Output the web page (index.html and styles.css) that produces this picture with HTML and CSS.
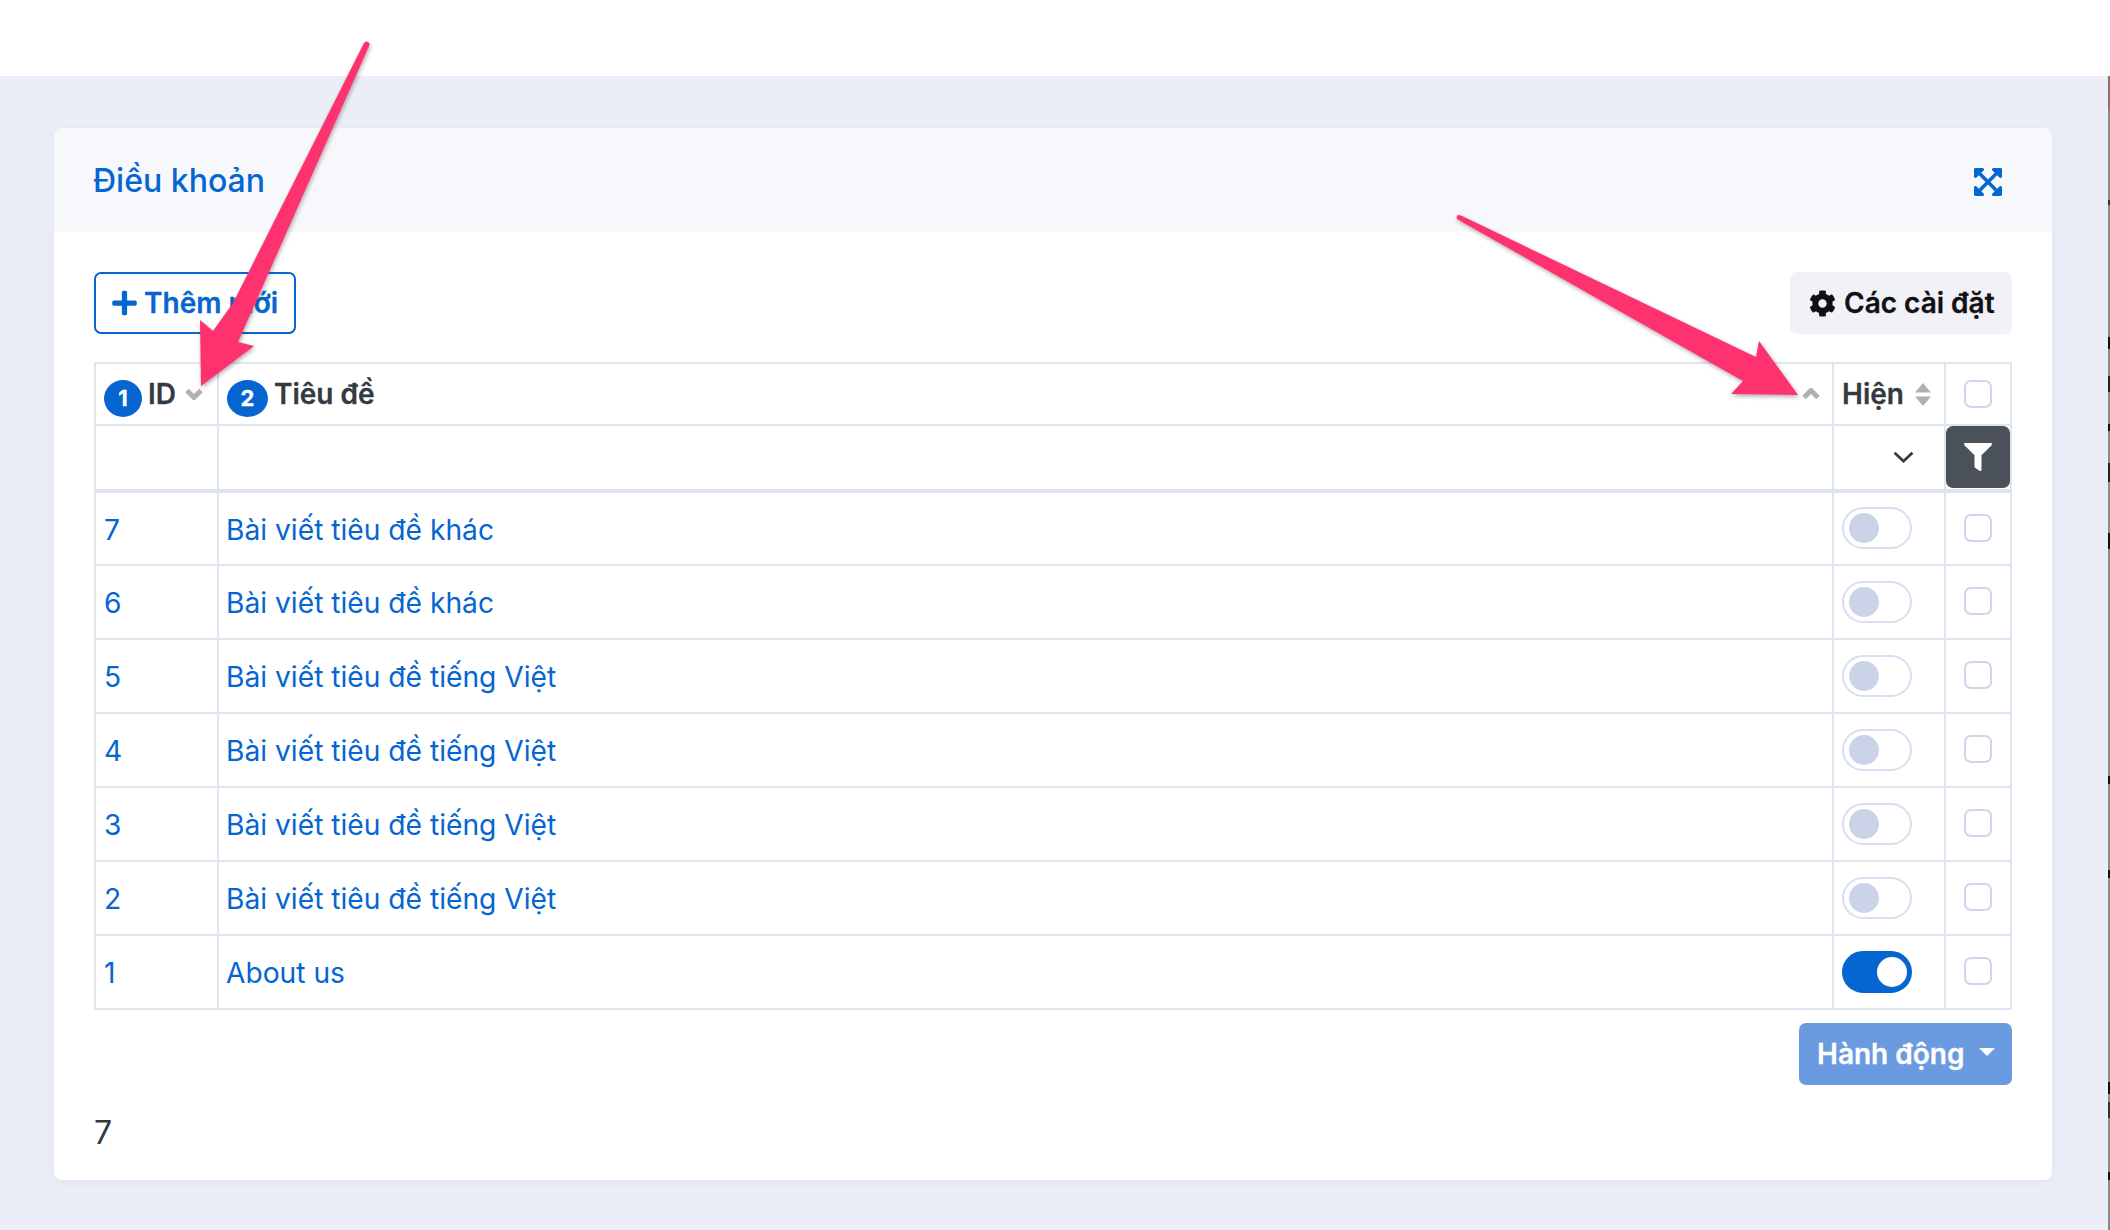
FILE: index.html
```html
<!DOCTYPE html>
<html lang="vi">
<head>
<meta charset="utf-8">
<title>Điều khoản</title>
<link rel="stylesheet" href="styles.css">
</head>
<body>
<div class="topbar"></div>
<div class="shell">
  <main class="content">
    <section class="card">
      <header class="card-head">
        <h1 class="card-title">Điều khoản</h1>
        <svg class="icon-expand" viewBox="0 0 448 512"><path d="M448 344v112a23.94 23.94 0 0 1-24 24H312c-21.39 0-32.09-25.9-17-41l36.2-36.2L224 295.6 116.77 402.9 153 439c15.09 15.1 4.39 41-17 41H24a23.94 23.94 0 0 1-24-24V344c0-21.4 25.89-32.1 41-17l36.19 36.2L184.46 256 77.18 148.7 41 185c-15.1 15.1-41 4.4-41-17V56a23.94 23.94 0 0 1 24-24h112c21.39 0 32.09 25.9 17 41l-36.2 36.2L224 216.4l107.23-107.3L295 73c-15.09-15.1-4.39-41 17-41h112a23.94 23.94 0 0 1 24 24v112c0 21.4-25.89 32.1-41 17l-36.19-36.2L263.54 256l107.28 107.3L407 327.1c15.1-15.2 41-4.5 41 16.9z"/></svg>
      </header>
      <div class="card-body">
        <div class="toolbar">
          <button class="btn btn-add">
            <svg class="icon-plus" viewBox="0 0 448 512"><path d="M416 208H272V64c0-17.67-14.33-32-32-32h-32c-17.67 0-32 14.33-32 32v144H32c-17.67 0-32 14.33-32 32v32c0 17.67 14.33 32 32 32h144v144c0 17.67 14.33 32 32 32h32c17.67 0 32-14.33 32-32V304h144c17.67 0 32-14.33 32-32v-32c0-17.67-14.33-32-32-32z"/></svg>
            Thêm mới
          </button>
          <button class="btn btn-settings">
            <svg class="icon-cog" viewBox="0 0 512 512"><path d="M487.4 315.7l-42.6-24.6c4.3-23.2 4.3-47 0-70.2l42.6-24.6c4.9-2.8 7.1-8.6 5.5-14-11.1-35.6-30-67.8-54.7-94.6-3.8-4.1-10-5.1-14.8-2.3L380.8 110c-17.9-15.4-38.5-27.3-60.8-35.1V25.8c0-5.6-3.9-10.5-9.4-11.7-36.7-8.2-74.3-7.8-109.2 0-5.5 1.2-9.4 6.1-9.4 11.7V75c-22.2 7.9-42.8 19.8-60.8 35.1L88.7 85.5c-4.9-2.8-11-1.9-14.8 2.3-24.7 26.7-43.6 58.9-54.7 94.6-1.7 5.4.6 11.2 5.5 14L67.3 221c-4.3 23.2-4.3 47 0 70.2l-42.6 24.6c-4.9 2.8-7.1 8.6-5.5 14 11.1 35.6 30 67.8 54.7 94.6 3.8 4.1 10 5.1 14.8 2.3l42.6-24.6c17.9 15.4 38.5 27.3 60.8 35.1v49.2c0 5.6 3.9 10.5 9.4 11.7 36.7 8.2 74.3 7.8 109.2 0 5.5-1.2 9.4-6.1 9.4-11.7v-49.2c22.2-7.9 42.8-19.8 60.8-35.1l42.6 24.6c4.9 2.8 11 1.9 14.8-2.3 24.7-26.7 43.6-58.9 54.7-94.6 1.5-5.5-.7-11.3-5.6-14.1zM256 336c-44.1 0-80-35.9-80-80s35.9-80 80-80 80 35.9 80 80-35.9 80-80 80z"/></svg>
            Các cài đặt
          </button>
        </div>
        <table class="grid">
          <colgroup>
            <col class="col-id"><col class="col-title"><col class="col-show"><col class="col-check">
          </colgroup>
          <thead>
            <tr class="row-head">
              <th><div class="th-in"><span class="badge badge-1">1</span><span>ID</span>
                <svg class="sort-chev sort-id" viewBox="0 0 18 12"><path d="M2 2.500 9 9.500l7-7"/></svg></div></th>
              <th><div class="th-in"><span class="badge badge-2">2</span><span>Tiêu đề</span>
                <svg class="sort-chev" viewBox="0 0 18 12"><path d="M2 9.500 9 2.500l7 7"/></svg></div></th>
              <th><div class="th-in"><span>Hiện</span>
                <svg class="sort-both" viewBox="0 0 18 23"><path d="M9 0l8 9.500H1zM9 23l-8-9.500h16z"/></svg></div></th>
              <th class="cell-center"><span class="check"></span></th>
            </tr>
            <tr class="row-filter">
              <th></th>
              <th></th>
              <th><div class="select-in"><svg class="select-chev" viewBox="0 0 20 11"><path d="M1.500 1.500 10 9.500l8.500-8"/></svg></div></th>
              <th class="cell-filter"><button class="btn-filter"><svg class="icon-filter" viewBox="0 0 512 512"><path d="M487.976 0H24.028C2.71 0-8.047 25.866 7.058 40.971L192 225.941V432c0 7.831 3.821 15.17 10.237 19.662l80 55.98C298.02 518.69 320 507.493 320 487.98V225.941l184.947-184.97C520.021 25.896 509.338 0 487.976 0z"/></svg></button></th>
            </tr>
          </thead>
          <tbody>
            <tr><td>7</td><td>Bài viết tiêu đề khác</td><td><span class="toggle"></span></td><td class="cell-center"><span class="check"></span></td></tr>
            <tr><td>6</td><td>Bài viết tiêu đề khác</td><td><span class="toggle"></span></td><td class="cell-center"><span class="check"></span></td></tr>
            <tr><td>5</td><td>Bài viết tiêu đề tiếng Việt</td><td><span class="toggle"></span></td><td class="cell-center"><span class="check"></span></td></tr>
            <tr><td>4</td><td>Bài viết tiêu đề tiếng Việt</td><td><span class="toggle"></span></td><td class="cell-center"><span class="check"></span></td></tr>
            <tr><td>3</td><td>Bài viết tiêu đề tiếng Việt</td><td><span class="toggle"></span></td><td class="cell-center"><span class="check"></span></td></tr>
            <tr><td>2</td><td>Bài viết tiêu đề tiếng Việt</td><td><span class="toggle"></span></td><td class="cell-center"><span class="check"></span></td></tr>
            <tr><td>1</td><td>About us</td><td><span class="toggle toggle-on"></span></td><td class="cell-center"><span class="check"></span></td></tr>
          </tbody>
        </table>
        <div class="actions">
          <button class="btn btn-action">Hành động<span class="caret"></span></button>
        </div>
        <div class="total">7</div>
      </div>
    </section>
  </main>
  <div class="edge-strip"></div>
</div>
<svg class="arrows" viewBox="0 0 2110 1230">
  <path d="M364 43Q367 40 369 43Q370 44 369 46L238 342 254 346 201 386 200 320 213 331 233 303Z"/>
  <path d="M1457 219Q1456 216 1458 215Q1460 215 1462 216L1756 357 1759 341 1798 395 1731 394 1743 381Z"/>
</svg>
</body>
</html>
```
FILE: styles.css
```css
* { box-sizing: border-box; }
html, body { margin: 0; padding: 0; }
body {
  position: relative;
  width: 2110px;
  height: 1230px;
  overflow: hidden;
  background: #fff;
  font-family: Inter, "Noto Sans", sans-serif;
  font-size: 28.2px;
  color: #343a40;
}
.topbar { height: 76px; background: #fff; }
.shell { display: flex; height: 1154px; }
.content { flex: 1; min-width: 0; background: #ebeef7; padding: 52px 56px 50px 54px; }
.edge-strip {
  width: 2px;
  background: linear-gradient(to bottom,
    #8f7078 0, #8f7078 34px, #8a8a8a 34px, #8a8a8a 124px, #333 124px, #333 129px, #8a8a8a 129px,
    #8a8a8a 261px, #111 261px, #111 273px, #8a8a8a 273px, #8a8a8a 300px, #222 300px, #222 316px,
    #8a8a8a 316px, #8a8a8a 348px, #111 348px, #111 355px, #8a8a8a 355px, #8a8a8a 387px, #222 387px,
    #222 406px, #8a8a8a 406px, #8a8a8a 457px, #111 457px, #111 473px, #8a8a8a 473px, #8a8a8a 700px,
    #111 700px, #111 708px, #8a8a8a 708px, #8a8a8a 794px, #111 794px, #111 802px, #8a8a8a 802px,
    #8a8a8a 1006px, #111 1006px, #111 1018px, #8a8a8a 1018px, #8a8a8a 1026px, #333 1026px, #333 1042px,
    #8a8a8a 1042px, #8a8a8a 1096px, #111 1096px, #111 1104px, #8a8a8a 1104px);
}

.card {
  height: 1052px;
  background: #fff;
  border-radius: 8px;
  box-shadow: 0 2px 8px rgba(90, 110, 170, .08);
  overflow: hidden;
}
.card-head {
  height: 104px;
  padding: 0 50px 0 39px;
  background: #f7f8fc;
  display: flex;
  align-items: center;
  justify-content: space-between;
}
.card-title { margin: 0; font-size: 32px; font-weight: 500; color: #0565d1; }
.icon-expand { width: 28px; height: 32px; margin-top: 4px; fill: #0565d1; }
.card-body { padding: 40px 40px 0; }

.toolbar { display: flex; justify-content: space-between; height: 62px; margin-bottom: 28px; }
.btn {
  font: 600 28px Inter, "Noto Sans", sans-serif;
  -webkit-text-stroke: .3px currentColor;
  display: inline-flex;
  align-items: center;
  border: 0;
  padding: 0;
  border-radius: 7px;
}
.btn-add {
  width: 202px;
  background: #fff;
  border: 2px solid #0565d1;
  color: #0565d1;
  padding-left: 16px;
  gap: 7px;
}
.icon-plus { width: 25px; height: 28px; fill: #0565d1; }
.btn-settings {
  width: 222px;
  background: #f0f2f8;
  color: #111;
  padding-left: 19px;
  gap: 8px;
}
.icon-cog { width: 27px; height: 27px; fill: #111; }

.grid {
  width: 1918px;
  table-layout: fixed;
  border-collapse: collapse;
  border: 2px solid #dfe4f1;
}
.col-id { width: 123px; }
.col-show { width: 112px; }
.col-check { width: 66px; }
.grid th, .grid td {
  border: 2px solid #dfe4f1;
  padding: 0 8px;
  text-align: left;
}
.grid td { color: #0565d1; font-weight: 400; }
.grid tbody td:nth-child(-n+2) { padding-top: 2px; }
.grid tbody td:nth-child(2) { padding-left: 7px; }
.grid tbody tr { height: 74px; }
.row-head { height: 62px; }
.row-filter { height: 66px; }
.row-filter th { border-bottom-width: 4px; }
.th-in {
  display: flex;
  align-items: center;
  font-size: 28px;
  font-weight: 600;
  -webkit-text-stroke: .3px currentColor;
  color: #343a40;
}
.badge {
  height: 37px;
  margin-top: 8px;
  margin-right: 6px;
  border-radius: 50%;
  background: #0565d1;
  color: #fff;
  font-size: 22px;
  font-weight: 700;
  display: flex;
  align-items: center;
  justify-content: center;
}
.badge-1 { width: 38px; }
.badge-2 { width: 41px; }
.sort-chev { width: 18px; height: 12px; margin-left: auto; margin-right: 4px; fill: none; stroke: #b0b0b0; stroke-width: 5; }
.sort-id { margin-right: 6px; }
.sort-both { width: 18px; height: 23px; margin-left: auto; margin-right: 4px; fill: #b0b0b0; }
.cell-center { text-align: center !important; }
.check {
  display: block;
  margin: -2px auto 0;
  width: 28px;
  height: 28px;
  border: 2px solid #cdd7ec;
  border-radius: 7px;
  background: #fff;
}
.row-head .check { margin-top: 0; }
.toggle {
  display: block;
  position: relative;
  width: 70px;
  height: 42px;
  margin-top: -1px;
  border: 2px solid #d9dff0;
  border-radius: 21px;
  background: #fff;
}
.toggle::after {
  content: "";
  position: absolute;
  left: 5px;
  top: 4px;
  width: 30px;
  height: 30px;
  border-radius: 50%;
  background: #cbd3e8;
}
.toggle-on { background: #0565d1; border-color: #0565d1; }
.toggle-on::after { left: 33px; background: #fff; }
.select-in { display: flex; justify-content: flex-end; padding-right: 22px; margin-top: -2px; }
.select-chev { width: 21px; height: 12px; fill: none; stroke: #343a40; stroke-width: 2.6; }
.cell-filter { padding: 0 !important; }
.btn-filter {
  display: flex;
  align-items: center;
  justify-content: center;
  width: 64px;
  height: 62px;
  margin: -1px auto 0;
  padding: 0;
  border: 0;
  border-radius: 7px;
  background: #4a5158;
}
.icon-filter { width: 28px; height: 28px; fill: #fff; }

.actions { display: flex; justify-content: flex-end; margin-top: 13px; }
.btn-action {
  width: 213px;
  height: 62px;
  background: #6a9be0;
  color: #fff;
  padding-left: 18px;
}
.caret {
  margin-left: 15px;
  margin-top: -4px;
  border-left: 8px solid transparent;
  border-right: 8px solid transparent;
  border-top: 8px solid #fff;
}
.total { margin-top: 28px; font-size: 32px; color: #343a40; }

.arrows {
  position: absolute;
  left: 0;
  top: 0;
  width: 2110px;
  height: 1230px;
  pointer-events: none;
  fill: #ff3270;
  filter: drop-shadow(1px 2px 2px rgba(90, 60, 70, .45));
}
```
